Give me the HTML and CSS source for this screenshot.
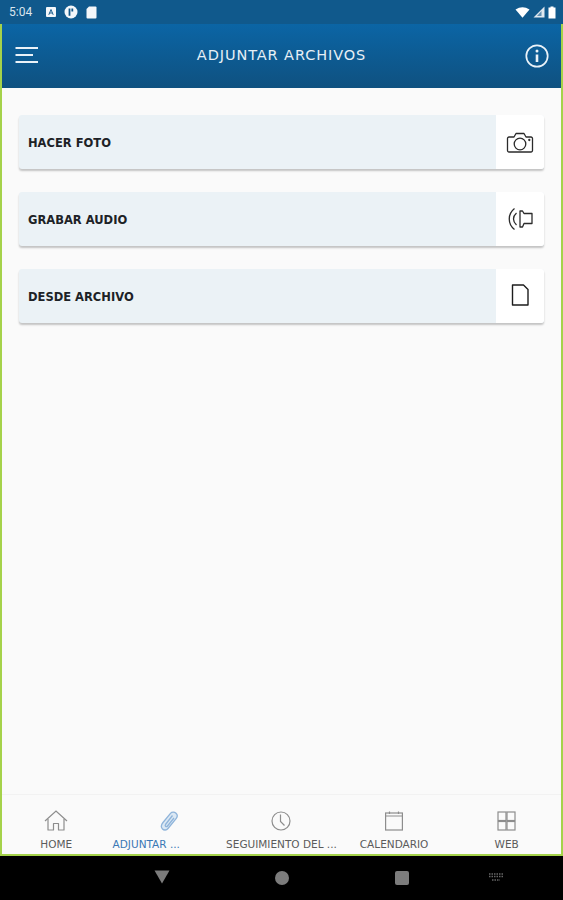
FILE: index.html
```html
<!DOCTYPE html>
<html lang="es">
<head>
    <meta charset="UTF-8">
    <meta name="viewport" content="width=device-width, initial-scale=1.0">
    <title>Adjuntar archivos</title>
    <link rel="stylesheet" href="styles.css">
</head>
<body>
    <div class="status-bar">
        <div class="status-left">
            <span class="status-time">5:04</span>
            <svg class="status-icon" width="10" height="10" viewBox="0 0 10 10"><rect x="0" y="0" width="10" height="10" rx="1" fill="#f4f7fa"/><path d="M2.800 7.800 5 2.500 7.200 7.800M3.600 6H6.400" fill="none" stroke="#1d5f8f" stroke-width="1"/></svg>
            <svg class="status-icon" width="14" height="14" viewBox="0 0 14 14"><circle cx="7" cy="7" r="6.500" fill="#f4f7fa"/><path d="M4.600 3.400H6.400V10.800H4.600ZM7.400 3.400H9.200V6.600H7.400Z" fill="#0f5687"/></svg>
            <svg class="status-icon" width="11" height="13" viewBox="0 0 11 13"><path d="M3 0.500H9.500A1 1 0 0 1 10.500 1.500V11.500A1 1 0 0 1 9.500 12.500H1.500A1 1 0 0 1 0.500 11.500V3Z" fill="#f4f7fa"/></svg>
        </div>
        <div class="status-right">
            <svg width="15" height="11" viewBox="0 0 15 11"><path d="M0.500 2.500Q7.500 -2 14.500 2.500L7.500 10.800Z" fill="#fff"/></svg>
            <svg width="12" height="12" viewBox="0 0 12 12"><path d="M11.500 0.500V11.500H0.500Z" fill="#dfe8ef"/><path d="M8.500 5V10H4Z" fill="#5f8fb2"/></svg>
            <svg width="8" height="13" viewBox="0 0 8 13"><path d="M2.500 0.500H5.500V1.500H7.500V12.500H0.500V1.500H2.500Z" fill="#fff"/></svg>
        </div>
    </div>

    <div class="app-frame">
        <header class="app-header">
            <svg class="menu-icon" width="24" height="16" viewBox="0 0 24 16"><path d="M0.500 1H23M0.500 8H18M0.500 15H23" stroke="#eaf2f8" stroke-width="2" fill="none"/></svg>
            <h1>ADJUNTAR ARCHIVOS</h1>
            <svg class="info-icon" width="24" height="24" viewBox="0 0 24 24"><circle cx="12" cy="12" r="10.700" fill="none" stroke="#eaf2f8" stroke-width="1.700"/><path d="M12 10.500V18" stroke="#eaf2f8" stroke-width="2.600"/><circle cx="12" cy="7" r="1.500" fill="#eaf2f8"/></svg>
        </header>

        <main class="content">
            <div class="option-card">
                <span class="option-label">HACER FOTO</span>
                <span class="option-icon">
                    <svg width="28" height="23" viewBox="0 0 28 23" fill="none" stroke="#2b2b2b" stroke-width="1.300"><path d="M3 6H8L10 2.500H18L20 6H25A1.500 1.500 0 0 1 26.500 7.500V19.500A1.500 1.500 0 0 1 25 21H3A1.500 1.500 0 0 1 1.500 19.500V7.500A1.500 1.500 0 0 1 3 6Z" stroke-linejoin="round"/><circle cx="14" cy="13" r="5.800"/><circle cx="23.300" cy="9" r="0.500"/></svg>
                </span>
            </div>
            <div class="option-card">
                <span class="option-label">GRABAR AUDIO</span>
                <span class="option-icon">
                    <svg width="26" height="24" viewBox="0 0 26 24" fill="none" stroke="#2b2b2b" stroke-width="1.300"><path d="M13 4H15.500L17 6.500H25V16.500H17L15.500 20H13Z" stroke-linejoin="round"/><path d="M7.500 1.500C0.500 7 0.500 17 7.500 22.500"/><path d="M9.500 6C5.500 9.500 5.500 14.500 9.500 18"/></svg>
                </span>
            </div>
            <div class="option-card">
                <span class="option-label">DESDE ARCHIVO</span>
                <span class="option-icon option-icon-file">
                    <svg width="18" height="22" viewBox="0 0 18 22" fill="none" stroke="#1c1c1c" stroke-width="1.400"><path d="M1.500 1H12.500L17 5.500V21H1.500Z" stroke-linejoin="round"/></svg>
                </span>
            </div>
        </main>

        <nav class="tab-bar">
            <div class="tab">
                <svg width="24" height="21" viewBox="0 0 24 21" fill="none" stroke="#8d8d8d" stroke-width="1.200"><path d="M1 11 12 1 23 11"/><path d="M4 9V20H9.500V13.500H14.500V20H20V9" stroke-linejoin="round"/></svg>
                <span class="tab-label">HOME</span>
            </div>
            <div class="tab tab-active">
                <svg width="18" height="20" viewBox="0 0 18 20" fill="none" stroke="#8fb4da" stroke-width="1.300"><path d="M3 11.500 10.500 2.300C12 0.500 14.500 0.800 16 2.200 17.500 3.700 17.500 5.800 16.300 7.300L8 17.500C6.500 19.300 4 19.500 2.500 18 1 16.500 1 14 3 11.500Z" fill="#dbe8f4"/><path d="M12.500 4.500 5.500 13.500C4.500 15 6.300 16.500 7.500 15L14 7"/></svg>
                <span class="tab-label">ADJUNTAR ...</span>
            </div>
            <div class="tab">
                <svg width="20" height="20" viewBox="0 0 20 20" fill="none" stroke="#8d8d8d" stroke-width="1.200"><circle cx="10" cy="10" r="9"/><path d="M9.500 3.500V10.500L13.500 14.500"/></svg>
                <span class="tab-label">SEGUIMIENTO DEL ...</span>
            </div>
            <div class="tab">
                <svg width="18" height="20" viewBox="0 0 18 20" fill="none" stroke="#8d8d8d" stroke-width="1.200"><rect x="0.600" y="2" width="16.800" height="17"/><path d="M0.600 5H17.400M4.500 0.500V3M13.500 0.500V3"/></svg>
                <span class="tab-label">CALENDARIO</span>
            </div>
            <div class="tab">
                <svg width="19" height="20" viewBox="0 0 19 20" fill="none" stroke="#8d8d8d" stroke-width="1.200"><rect x="1" y="1" width="8" height="8.500"/><rect x="10" y="1" width="8" height="8.500"/><rect x="1" y="10.500" width="8" height="8.500"/><rect x="10" y="10.500" width="8" height="8.500"/></svg>
                <span class="tab-label">WEB</span>
            </div>
        </nav>
    </div>

    <div class="nav-bar">
        <svg class="nav-back" width="16" height="14" viewBox="0 0 16 14"><path d="M0.500 0.500H15.500L8 13.500Z" fill="#7c7c7c"/></svg>
        <span class="nav-home"></span>
        <span class="nav-recent"></span>
        <svg class="nav-keyboard" width="16" height="10" viewBox="0 0 16 10"><path d="M1 1H15M1 3.500H15M4 7H12" stroke="#666" stroke-width="1.500" stroke-dasharray="1.500 1"/></svg>
    </div>
</body>
</html>
```

FILE: styles.css
```css
* { box-sizing: border-box; }
html, body { height: 100%; }
body { margin: 0; height: 900px; display: flex; flex-direction: column; font-family: "DejaVu Sans", "Liberation Sans", sans-serif; background-color: #000; overflow: hidden; }

.status-bar { height: 24px; flex: none; display: flex; justify-content: space-between; align-items: center; padding: 0 7px 0 9px; background-color: #10598c; }
.status-left { display: flex; align-items: center; }
.status-time { font-family: "Roboto", sans-serif; font-size: 12px; color: #dbe6ee; width: 37px; }
.status-left .status-icon { margin-right: 8px; }
.status-right { display: flex; align-items: center; gap: 3px; }

.app-frame { flex: 1; display: flex; flex-direction: column; border: 2px solid #a5d24a; border-top: none; background-color: #fafafa; }

.app-header { height: 64px; flex: none; position: relative; display: flex; align-items: center; justify-content: center; padding-bottom: 2px; background: linear-gradient(#0b65a5, #0f5180); }
.app-header h1 { margin: 0; font-size: 14.500px; font-weight: 400; letter-spacing: 0.900px; color: #e6eff6; }
.menu-icon { position: absolute; left: 13px; top: 23px; }
.info-icon { position: absolute; right: 12px; top: 20px; }

.content { flex: 1; padding: 27px 17px 0; display: flex; flex-direction: column; gap: 23px; border-bottom: 1px solid #f2f2f2; }

.option-card { height: 54px; display: flex; align-items: center; justify-content: space-between; background-color: #ebf2f6; border-radius: 3px; box-shadow: 0 2px 2px rgba(0,0,0,0.22); overflow: hidden; }
.option-label { padding: 1px 0 0 9px; font-size: 11.500px; font-weight: 700; color: #1d2226; }
.option-icon { width: 48px; height: 100%; display: flex; align-items: center; justify-content: center; background-color: #fff; }
.option-icon-file { padding-bottom: 2px; }

.tab-bar { height: 59px; flex: none; display: flex; margin: 0 -2px; }
.tab { flex: 1; display: flex; flex-direction: column; align-items: center; justify-content: flex-end; gap: 7px; padding-bottom: 4px; min-width: 0; }
.tab-label { font-size: 10.500px; color: #5b5b5b; white-space: nowrap; }
.tab-active .tab-label { align-self: flex-start; color: #3b78b5; }

.nav-bar { height: 44px; flex: none; position: relative; display: flex; align-items: center; background-color: #000; }
.nav-back { position: absolute; left: 154px; top: 14px; }
.nav-home { position: absolute; left: 275px; top: 15px; width: 14px; height: 14px; border-radius: 50%; background-color: #7c7c7c; }
.nav-recent { position: absolute; left: 395px; top: 15px; width: 14px; height: 14px; border-radius: 2px; background-color: #7c7c7c; }
.nav-keyboard { position: absolute; left: 488px; top: 17px; }
```
